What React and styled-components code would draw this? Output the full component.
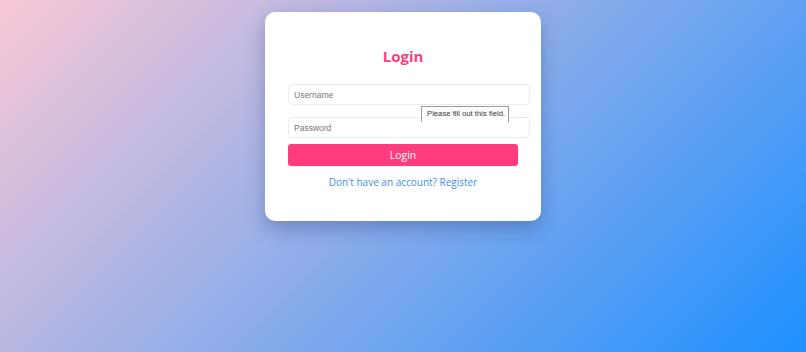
import React from "react";
import styled, { createGlobalStyle } from "styled-components";

const GlobalStyle = createGlobalStyle`
  html, body { margin: 0; padding: 0; }
  body {
    font-family: "Open Sans", "Noto Sans", sans-serif;
    background: linear-gradient(135deg, #fac8d6 0%, #1e90ff 100%);
    min-height: 352px;
  }
`;

const Page = styled.div`
  min-height: 352px;
  display: flex;
  flex-direction: column;
  align-items: center;
  padding-top: 12px;
  box-sizing: border-box;
`;

const Card = styled.div`
  position: relative;
  width: 276px;
  height: 209px;
  box-sizing: border-box;
  padding: 34px 23px 0;
  background: #fff;
  border-radius: 10px;
  box-shadow: 0 8px 18px rgba(40, 60, 120, 0.35);
`;

const Title = styled.h2`
  margin: 0;
  text-align: center;
  font-family: "Open Sans", sans-serif;
  font-weight: 700;
  font-size: 15px;
  line-height: 20px;
  color: #f43f7f;
`;

const Form = styled.form`
  display: flex;
  flex-direction: column;
  margin-top: 18px;
`;

const Input = styled.input`
  width: 242px;
  height: 21px;
  box-sizing: border-box;
  padding: 0 5px;
  margin: 0 0 ${(p) => p.$mb}px;
  border: 1px solid #ececec;
  border-radius: 4px;
  background: #fff;
  font-family: "Liberation Sans", Arial, sans-serif;
  font-size: 8.5px;
  color: #333;
  outline: none;
  &::placeholder { color: #777; }
`;

const Button = styled.button`
  width: 230px;
  height: 22px;
  margin: 0;
  border: none;
  border-radius: 3px;
  background: #ff3d7d;
  color: #fff;
  font-family: "Open Sans", sans-serif;
  font-size: 10.5px;
  padding: 0;
`;

const Footer = styled.p`
  margin: 8px 0 0;
  text-align: center;
  font-family: "Open Sans", sans-serif;
  font-size: 10px;
  line-height: 16px;
  color: #3a8eea;
`;

const Tooltip = styled.div`
  position: absolute;
  left: 156px;
  top: 94px;
  width: 88px;
  height: 16px;
  box-sizing: border-box;
  background: #fff;
  border: 1px solid #9a9a9a;
  border-bottom: none;
  font-family: "Liberation Sans", Arial, sans-serif;
  font-size: 7.7px;
  line-height: 14px;
  padding-left: 5px;
  color: #333;
  white-space: nowrap;
`;

export default function App() {
  return (
    <>
      <GlobalStyle />
      <Page>
        <Card>
          <Title>Login</Title>
          <Form onSubmit={(e) => e.preventDefault()}>
            <Input placeholder="Username" $mb={12} />
            <Input placeholder="Password" type="password" $mb={6} />
            <Button type="submit">Login</Button>
          </Form>
          <Footer>Don't have an account? Register</Footer>
          <Tooltip>Please fill out this field.</Tooltip>
        </Card>
      </Page>
    </>
  );
}
